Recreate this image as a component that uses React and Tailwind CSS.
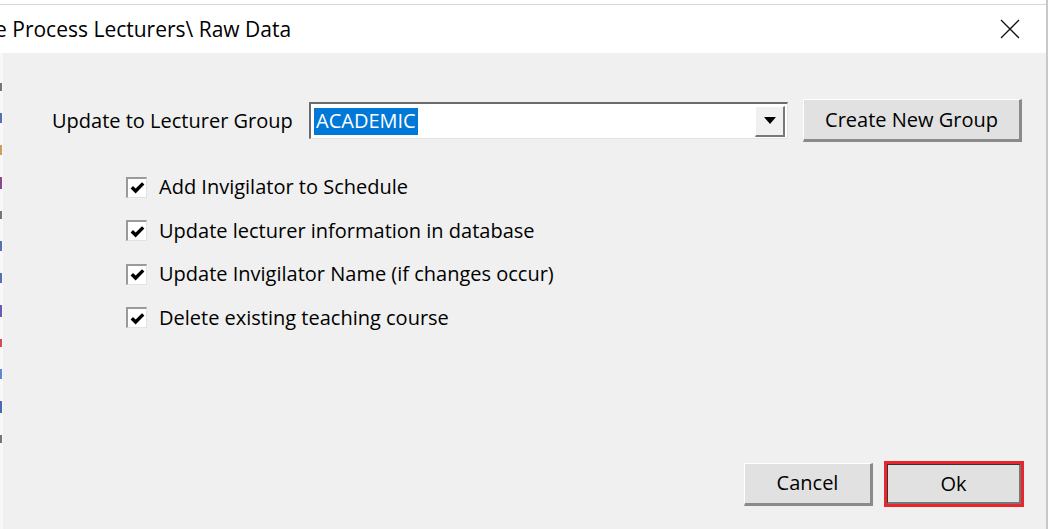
import React from "react";

function Check() {
  return (
    <div className="w-[21px] h-[21px] bg-white border-t-2 border-l-2 border-b border-r border-t-[#9a9a9a] border-l-[#9a9a9a] border-b-[#e3e3e3] border-r-[#e3e3e3] flex items-center justify-center">
      <svg width="15" height="13" viewBox="0 0 15 13">
        <path d="M1.8 6.2 L5.6 10 L13.2 2.4" fill="none" stroke="#000" strokeWidth="3.4" strokeLinejoin="miter" />
      </svg>
    </div>
  );
}

function CheckRow({ label }) {
  return (
    <div className="flex items-center h-[22px] gap-[12px]">
      <Check />
      <span>{label}</span>
    </div>
  );
}

function Btn({ children, className = "" }) {
  return (
    <div className={"flex items-center justify-center bg-[#e1e1e1] border-t border-l border-t-white border-l-white border-b-[3px] border-r-[3px] border-b-[#8a8a8a] border-r-[#8a8a8a] " + className}>
      {children}
    </div>
  );
}

export default function App() {
  return (
    <div className="w-[1050px] h-[529px] overflow-hidden bg-white flex flex-col text-black font-['Open_Sans','Segoe_UI',sans-serif] text-[20px] leading-none">
      {/* spreadsheet behind, top strip */}
      <div className="h-[5px] shrink-0 bg-white flex">
        <div className="w-[1046px] border-b border-[#d6d6d6]"></div>
        <div className="w-[4px] border-l-2 border-[#c8c8c8]"></div>
      </div>
      <div className="flex flex-1 min-h-0">
        <div className="w-[1046px] flex flex-col">
          {/* title bar */}
          <div className="h-[48px] shrink-0 bg-white flex items-center justify-between pr-[26px]">
            <span className="ml-[-5px] text-[21px]">e Process Lecturers\ Raw Data</span>
            <svg width="20" height="20" viewBox="0 0 20 20">
              <path d="M1 1 L19 19 M19 1 L1 19" stroke="#111" strokeWidth="1.3" fill="none" />
            </svg>
          </div>
          {/* body */}
          <div className="flex flex-1 min-h-0">
            <div className="w-[3px] bg-[#f7f7f7] flex flex-col items-start gap-[22px] pt-[30px]">
              <div className="w-[2px] h-[8px] bg-[#777]"></div>
              <div className="w-[2px] h-[10px] bg-[#5a6fb0]"></div>
              <div className="w-[2px] h-[10px] bg-[#c8a060]"></div>
              <div className="w-[2px] h-[12px] bg-[#8a4a8a]"></div>
              <div className="w-[2px] h-[8px] bg-[#777]"></div>
              <div className="w-[2px] h-[10px] bg-[#5a6fb0]"></div>
              <div className="w-[2px] h-[10px] bg-[#5a6fb0]"></div>
              <div className="w-[2px] h-[12px] bg-[#6a5ab0]"></div>
              <div className="w-[2px] h-[8px] bg-[#d05050]"></div>
              <div className="w-[2px] h-[10px] bg-[#5a8ad0]"></div>
              <div className="w-[2px] h-[12px] bg-[#4a6ab0]"></div>
              <div className="w-[2px] h-[8px] bg-[#777]"></div>
            </div>
            <div className="flex-1 bg-[#f0f0f0] flex flex-col">
              {/* group row */}
              <div className="flex items-center mt-[46px] h-[43px]">
                <span className="ml-[49px] w-[257px]">Update to Lecturer Group</span>
                <div className="w-[479px] h-[37px] bg-white border-t-2 border-l-2 border-t-[#6a6a6a] border-l-[#6a6a6a] border-b border-r border-b-[#e3e3e3] border-r-[#e3e3e3] flex items-center pl-[3px] pr-[2px]">
                  <div className="flex-1 flex items-center">
                    <span className="bg-[#0078d7] text-white px-[2px] h-[27px] flex items-center">ACADEMIC</span>
                  </div>
                  <div className="w-[30px] h-[31px] bg-[#f0f0f0] border-t border-l border-t-white border-l-white border-b-2 border-r-2 border-b-[#777] border-r-[#777] flex items-center justify-center">
                    <svg width="12" height="7" viewBox="0 0 12 7"><path d="M0 0 H12 L6 7 Z" fill="#000" /></svg>
                  </div>
                </div>
                <Btn className="ml-[15px] w-[219px] h-[43px]">Create New Group</Btn>
              </div>
              {/* checkboxes */}
              <div className="flex flex-col gap-[21.5px] ml-[123px] mt-[34px]">
                <CheckRow label="Add Invigilator to Schedule" />
                <CheckRow label="Update lecturer information in database" />
                <CheckRow label="Update Invigilator Name (if changes occur)" />
                <CheckRow label="Delete existing teaching course" />
              </div>
              <div className="flex-1"></div>
              {/* buttons */}
              <div className="flex items-center mb-[22px] ml-[741px]">
                <Btn className="w-[129px] h-[43px]">Cancel</Btn>
                <div className="ml-[11px] w-[140px] h-[46px] border-[3px] border-[#e8262b] flex">
                  <div className="flex-1 flex items-center justify-center bg-[#e1e1e1] border-b-2 border-r-2 border-b-[#777] border-r-[#777] border-t border-l border-t-[#333] border-l-[#333]">Ok</div>
                </div>
              </div>
            </div>
          </div>
        </div>
        <div className="w-[4px] flex">
          <div className="w-[2px] bg-[#c8c8c8]"></div>
          <div className="flex-1 bg-white"></div>
        </div>
      </div>
    </div>
  );
}
